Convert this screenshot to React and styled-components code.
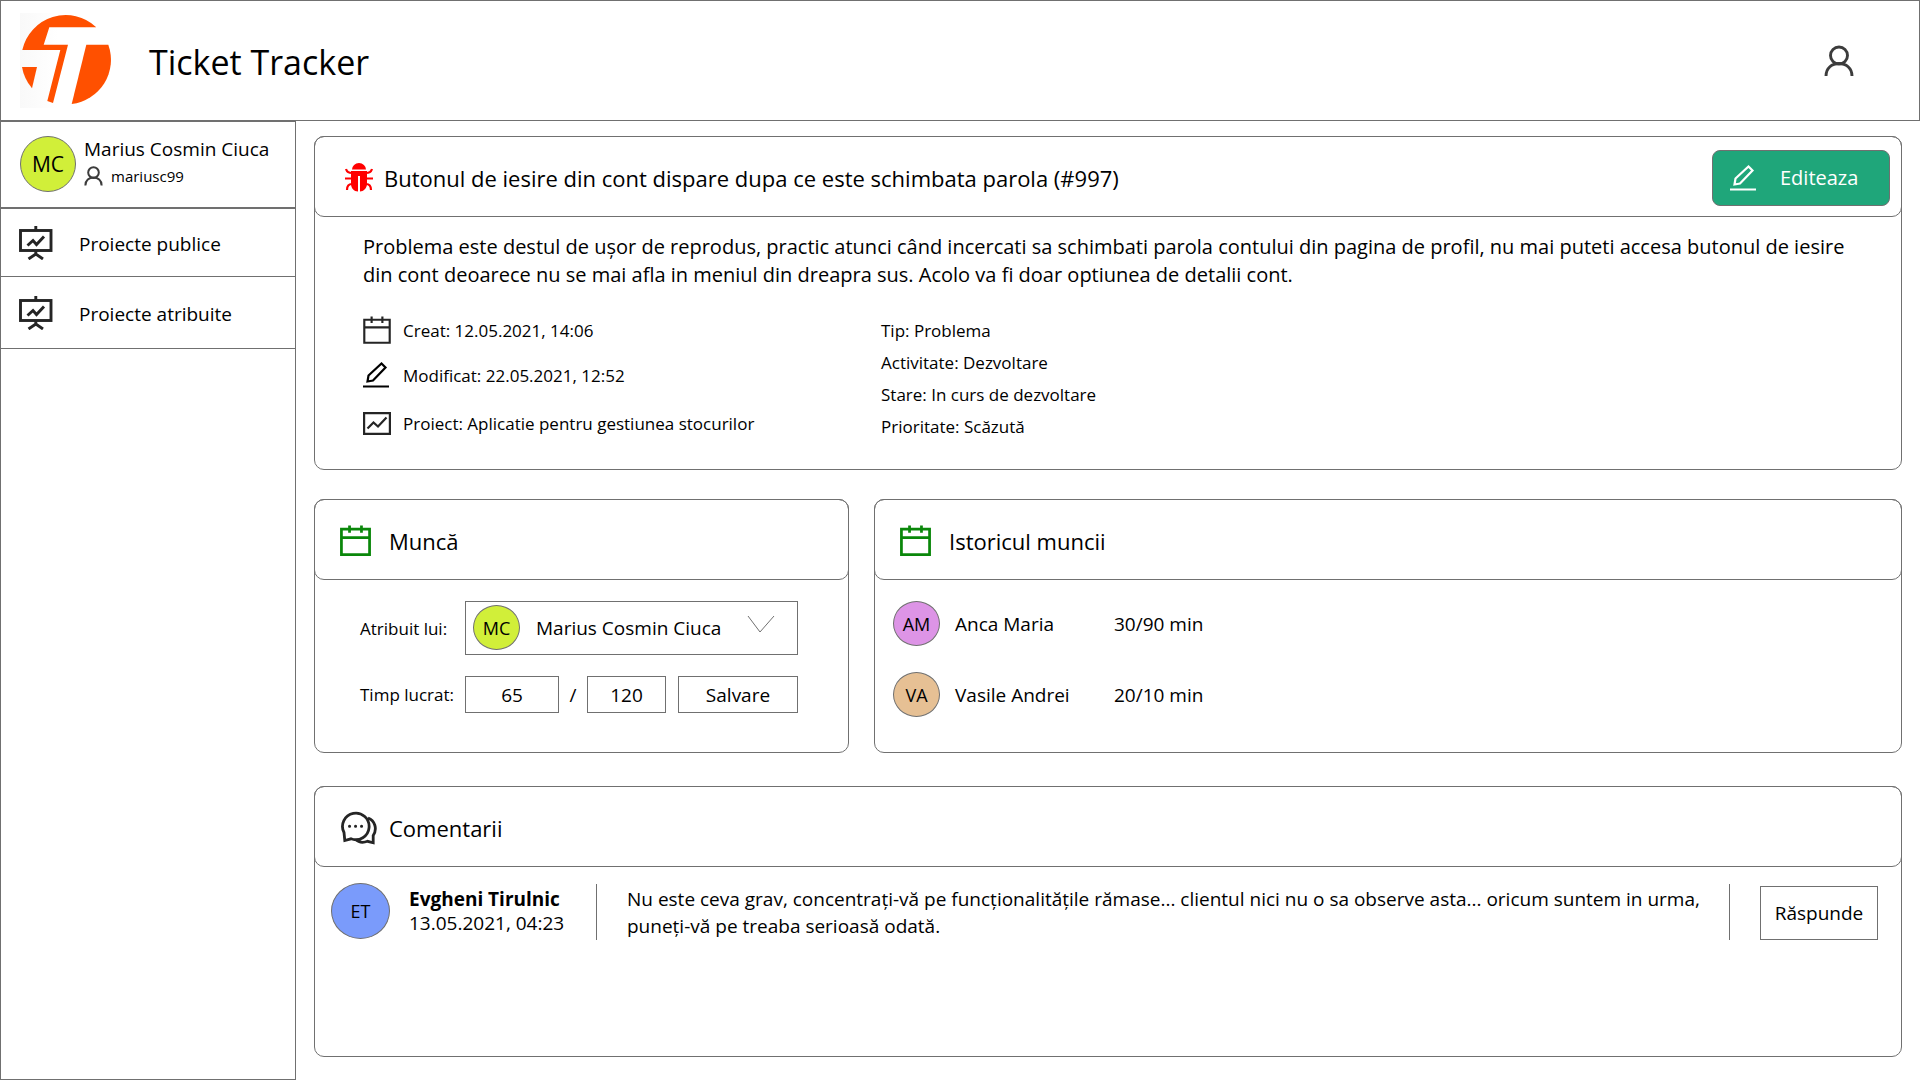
import React from "react";
import styled, { createGlobalStyle } from "styled-components";

const line = "#707070";

const Global = createGlobalStyle`
  *, *::before, *::after { box-sizing: border-box; }
  body { margin: 0; background: #fff; color: #000; font-family: "Open Sans", "Noto Sans", sans-serif; font-size: 16px; }
  h1, h2, p, ul { margin: 0; padding: 0; font-weight: 400; }
  ul { list-style: none; }
  a { color: inherit; text-decoration: none; }
  button, input, select { font: inherit; color: inherit; }
  svg { display: block; flex: none; }
`;

const Page = styled.div`
  min-height: 100vh;
  display: flex;
  flex-direction: column;
`;

const TopBar = styled.header`
  display: flex;
  align-items: center;
  height: 121px;
  padding: 0 65px 0 19px;
  border: 1px solid ${line};
`;

const LogoMark = styled.svg`
  background: linear-gradient(90deg, #f9f9f9, #fff 40%);
`;

const AppName = styled.h1`
  flex: 1;
  margin-left: 34px;
  padding-top: 2px;
  font-size: 34px;
  line-height: 48px;
`;

const PlainButton = styled.button`
  padding: 0;
  border: 0;
  background: none;
  color: #3c3c3c;
`;

const Body = styled.div`
  flex: 1;
  display: flex;
`;

const Sidebar = styled.aside`
  width: 296px;
  flex: none;
  border: 1px solid ${line};
`;

const Profile = styled.div`
  display: flex;
  gap: 8px;
  height: 87px;
  padding: 14px 0 0 19px;
  border-bottom: 2px solid ${line};
`;

const ProfileName = styled.div`
  font-size: 19px;
  line-height: 26px;
`;

const Handle = styled.div`
  display: flex;
  align-items: center;
  gap: 8px;
  font-size: 15px;
  line-height: 28px;

  svg { color: #3c3c3c; }
`;

const NavLink = styled.a`
  display: flex;
  align-items: center;
  gap: 26px;
  height: ${(p) => p.$height}px;
  padding-left: 18px;
  border-bottom: 1px solid ${line};
  font-size: 19px;
`;

const NavText = styled.span`
  padding-top: 2px;
`;

const Avatar = styled.span`
  display: flex;
  align-items: center;
  justify-content: center;
  flex: none;
  width: ${(p) => p.$w}px;
  height: ${(p) => p.$h}px;
  border: 1px solid ${line};
  border-radius: 50%;
  background: ${(p) => p.$color};
  font-size: ${(p) => p.$size || 18}px;
`;

const Main = styled.main`
  flex: 1;
  min-width: 0;
  display: flex;
  flex-direction: column;
  padding: 15px 18px 23px;
`;

const Card = styled.section`
  border: 1px solid ${line};
  border-radius: 10px;
  min-height: ${(p) => p.$min}px;
`;

const CardHead = styled.div`
  display: flex;
  align-items: center;
  gap: ${(p) => p.$gap || 18}px;
  height: 81px;
  margin: -1px;
  padding: 2px 11px 0 ${(p) => p.$left || 25}px;
  border: 1px solid ${line};
  border-radius: 10px;
`;

const CardTitle = styled.h2`
  flex: 1;
  font-size: 22px;
  line-height: 30px;
`;

const EditButton = styled.button`
  display: flex;
  align-items: center;
  gap: 24px;
  width: 178px;
  height: 56px;
  padding: 0 0 0 17px;
  border: 1px solid ${line};
  border-radius: 8px;
  background: #1fa67a;
  color: #fff;
  font-size: 20px;
`;

const Description = styled.p`
  padding: 17px 44px 0 48px;
  font-size: 20px;
  line-height: 28px;
`;

const Facts = styled.div`
  display: grid;
  grid-template-columns: 518px 1fr;
  padding: 19px 0 0 48px;
  font-size: 17px;
`;

const DatedList = styled.ul`
  display: grid;
  grid-template-rows: 44px 46px 50px;
  align-items: center;
`;

const DatedItem = styled.li`
  display: grid;
  grid-template-columns: 28px 1fr;
  column-gap: 12px;
  align-items: center;
`;

const Traits = styled.ul`
  padding-top: 7px;
  line-height: 32px;
`;

const Columns = styled.div`
  display: grid;
  grid-template-columns: 535fr 1028fr;
  gap: 25px;
  margin: 29px 0 33px;
`;

const WorkForm = styled.form`
  display: grid;
  grid-template-columns: 94px 333px;
  column-gap: 11px;
  row-gap: 21px;
  align-items: center;
  padding: 22px 0 0 45px;
  font-size: 17px;
  white-space: nowrap;
`;

const SelectWrap = styled.div`
  position: relative;
  height: 54px;
`;

const SelectBadge = styled.span`
  position: absolute;
  left: 8px;
  top: 4px;
  pointer-events: none;
`;

const SelectArrow = styled.span`
  position: absolute;
  right: 23px;
  top: 14px;
  pointer-events: none;
`;

const Assignee = styled.select`
  appearance: none;
  width: 100%;
  height: 54px;
  padding: 0 60px 0 70px;
  border: 1px solid ${line};
  border-radius: 0;
  background: #fff;
  font-size: 19px;
`;

const TimeRow = styled.div`
  display: flex;
  align-items: center;
`;

const TimeInput = styled.input`
  width: ${(p) => p.$w}px;
  height: 37px;
  padding: 0;
  border: 1px solid ${line};
  text-align: center;
  font-size: 19px;
`;

const Slash = styled.span`
  width: 28px;
  text-align: center;
  font-size: 19px;
`;

const OutlineButton = styled.button`
  width: ${(p) => p.$w}px;
  height: ${(p) => p.$h}px;
  padding: 0;
  border: 1px solid ${line};
  background: #fff;
  font-size: 19px;
`;

const SaveButton = styled(OutlineButton)`
  margin-left: auto;
`;

const History = styled.ul`
  display: grid;
  row-gap: 26px;
  padding: 22px 0 0 18px;
  font-size: 19px;
`;

const HistoryRow = styled.li`
  display: grid;
  grid-template-columns: 47px 144px 1fr;
  column-gap: 15px;
  align-items: center;
`;

const Comment = styled.article`
  display: flex;
  padding: 17px 23px 0 16px;
`;

const Author = styled.div`
  flex: none;
  width: 206px;
  padding: 4px 0 0 19px;
  font-size: 19px;
  line-height: 24px;
`;

const AuthorName = styled.div`
  font-weight: 700;
`;

const Message = styled.p`
  flex: 1;
  margin-top: 1px;
  padding: 2px 20px 0 30px;
  border-left: 1px solid ${line};
  border-right: 1px solid ${line};
  font-size: 19px;
  line-height: 27px;
`;

const Reply = styled.div`
  padding: 3px 0 0 30px;
`;

const Logo = () => (
  <LogoMark width="95" height="95" viewBox="0 0 95 95" aria-hidden="true">
    <path fill="#ff5000" d="M2.300 37A44.500 44.500 0 0 1 76.300 14.300H29.300L23.700 31.700H48L33 90L27.300 88L40.300 37Z" />
    <path fill="#ff5000" d="M66.300 31.700H88.300A44.500 44.500 0 0 1 51.700 91Z" />
    <path fill="#ff5000" d="M2 54H17L12 75.300A44.500 44.500 0 0 1 2 54Z" />
  </LogoMark>
);

const User = ({ w, h, stroke = 2.9 }) => (
  <svg width={w} height={h} viewBox="0 0 30 32" fill="none" stroke="currentColor" strokeWidth={stroke} aria-hidden="true">
    <circle cx="15" cy="10.500" r="8.500" />
    <path d="M2 31c0-8 6-12.500 13-12.500S28 23 28 31" />
  </svg>
);

const Board = () => (
  <svg width="34" height="34" viewBox="0 0 34 34" fill="none" stroke="#252525" strokeWidth="2.900" aria-hidden="true">
    <rect x="1.500" y="4.500" width="30.500" height="20" />
    <path d="M16.800 0v4M16.800 24v4M8.500 19.500l5.500-5 3.500 4 7.500-8M9.500 33l7.300-5 7.200 5" />
  </svg>
);

const Calendar = ({ size, color, stroke }) => (
  <svg width={size} height={size} viewBox="0 0 26 26" fill="none" stroke={color} strokeWidth={stroke} aria-hidden="true">
    <path d="M1.200 3.500h23.600v21.300H1.200zM1.200 10.500h23.600M8 .5v6M18 .5v6" />
  </svg>
);

const Pencil = () => (
  <svg width="26" height="26" viewBox="0 0 26 26" fill="none" stroke="currentColor" strokeWidth="2.200" aria-hidden="true">
    <path d="M4.500 19.500l1-6L18.500 1.500l4 4L10 18.500zM0 24.500h26" />
  </svg>
);

const Chart = () => (
  <svg width="28" height="23" viewBox="0 0 28 23" fill="none" stroke="#252525" strokeWidth="2.200" aria-hidden="true">
    <path d="M1.100 1.100h25.800v20.800H1.100zM4.500 16.500l6-6 4.500 4 8.500-9" />
  </svg>
);

const Bug = () => (
  <svg width="28" height="29" viewBox="0 0 28 29" aria-hidden="true">
    <path fill="#f00" d="M7 6.500a7 6.500 0 0 1 14 0zM6 8h16v13c0 4-3.500 7.500-7 7.500V13h-2v15.500c-4 0-7-3.500-7-7.500z" />
    <path fill="none" stroke="#f00" strokeWidth="2.200" d="M1 6c1 3 3 4 6 4M27 6c-1 3-3 4-6 4M0 15.500h7M21 15.500h7M2 27c0-4 2-6 5-6M26 27c0-4-2-6-5-6" />
  </svg>
);

const Chat = () => (
  <svg width="37" height="34" viewBox="0 0 37 34" fill="none" stroke="#252525" strokeWidth="2.800" aria-hidden="true">
    <path d="M4.800 29.500L4 21.500A13.300 13.300 0 1 1 11 27.800zM28 7C35 9.500 37.500 18 33.200 24.500v7.300l-5.700-1.500c-4 1.500-9 1-12-2" />
    <path strokeWidth="3" strokeLinecap="round" d="M9.500 15.200h.1M15.500 15.200h.1M21.500 15.200h.1" />
  </svg>
);

const Chevron = () => (
  <svg width="28" height="18" viewBox="0 0 28 18" fill="none" stroke={line} aria-hidden="true">
    <path d="M1 1l12 16L27 1" />
  </svg>
);

const lime = "#d1ef39";

export default function App() {
  return (
    <Page>
      <Global />
      <TopBar>
        <Logo />
        <AppName>Ticket Tracker</AppName>
        <PlainButton type="button" aria-label="Cont"><User w={30} h={32} /></PlainButton>
      </TopBar>
      <Body>
        <Sidebar>
          <Profile>
            <Avatar $w={56} $h={56} $color={lime} $size={21}>MC</Avatar>
            <div>
              <ProfileName>Marius Cosmin Ciuca</ProfileName>
              <Handle><User w={19} h={20} stroke={3.2} />mariusc99</Handle>
            </div>
          </Profile>
          <nav>
            <NavLink href="#publice" $height={68}><Board /><NavText>Proiecte publice</NavText></NavLink>
            <NavLink href="#atribuite" $height={72}><Board /><NavText>Proiecte atribuite</NavText></NavLink>
          </nav>
        </Sidebar>
        <Main>
          <Card $min={334}>
            <CardHead $left={30} $gap={11}>
              <Bug />
              <CardTitle>Butonul de iesire din cont dispare dupa ce este schimbata parola (#997)</CardTitle>
              <EditButton type="button"><Pencil />Editeaza</EditButton>
            </CardHead>
            <Description>
              Problema este destul de ușor de reprodus, practic atunci când incercati sa schimbati parola contului din pagina de profil, nu mai puteti accesa butonul de iesire din cont deoarece nu se mai afla in meniul din dreapra sus. Acolo va fi doar optiunea de detalii cont.
            </Description>
            <Facts>
              <DatedList>
                <DatedItem><Calendar size={28} color="#252525" stroke={2} />Creat: 12.05.2021, 14:06</DatedItem>
                <DatedItem><Pencil />Modificat: 22.05.2021, 12:52</DatedItem>
                <DatedItem><Chart />Proiect: Aplicatie pentru gestiunea stocurilor</DatedItem>
              </DatedList>
              <Traits>
                <li>Tip: Problema</li>
                <li>Activitate: Dezvoltare</li>
                <li>Stare: In curs de dezvoltare</li>
                <li>Prioritate: Scăzută</li>
              </Traits>
            </Facts>
          </Card>
          <Columns>
            <Card $min={254}>
              <CardHead>
                <Calendar size={31} color="#0a870a" stroke={2.3} />
                <CardTitle>Muncă</CardTitle>
              </CardHead>
              <WorkForm>
                <label htmlFor="assignee">Atribuit lui:</label>
                <SelectWrap>
                  <Assignee id="assignee"><option>Marius Cosmin Ciuca</option></Assignee>
                  <SelectBadge><Avatar $w={47} $h={45} $color={lime}>MC</Avatar></SelectBadge>
                  <SelectArrow><Chevron /></SelectArrow>
                </SelectWrap>
                <label htmlFor="worked">Timp lucrat:</label>
                <TimeRow>
                  <TimeInput id="worked" $w={94} defaultValue="65" />
                  <Slash>/</Slash>
                  <TimeInput aria-label="Timp estimat" $w={79} defaultValue="120" />
                  <SaveButton type="button" $w={120} $h={37}>Salvare</SaveButton>
                </TimeRow>
              </WorkForm>
            </Card>
            <Card $min={254}>
              <CardHead>
                <Calendar size={31} color="#0a870a" stroke={2.3} />
                <CardTitle>Istoricul muncii</CardTitle>
              </CardHead>
              <History>
                <HistoryRow><Avatar $w={47} $h={45} $color="#dd94e6">AM</Avatar><span>Anca Maria</span><span>30/90 min</span></HistoryRow>
                <HistoryRow><Avatar $w={47} $h={45} $color="#e6c094">VA</Avatar><span>Vasile Andrei</span><span>20/10 min</span></HistoryRow>
              </History>
            </Card>
          </Columns>
          <Card $min={271}>
            <CardHead $gap={12}>
              <Chat />
              <CardTitle>Comentarii</CardTitle>
            </CardHead>
            <Comment>
              <Avatar $w={59} $h={56} $color="#7a9bfb">ET</Avatar>
              <Author>
                <AuthorName>Evgheni Tirulnic</AuthorName>
                <time>13.05.2021, 04:23</time>
              </Author>
              <Message>
                Nu este ceva grav, concentrați-vă pe funcționalitățile rămase... clientul nici nu o sa observe asta... oricum suntem in urma, puneți-vă pe treaba serioasă odată.
              </Message>
              <Reply><OutlineButton type="button" $w={118} $h={54}>Răspunde</OutlineButton></Reply>
            </Comment>
          </Card>
        </Main>
      </Body>
    </Page>
  );
}
